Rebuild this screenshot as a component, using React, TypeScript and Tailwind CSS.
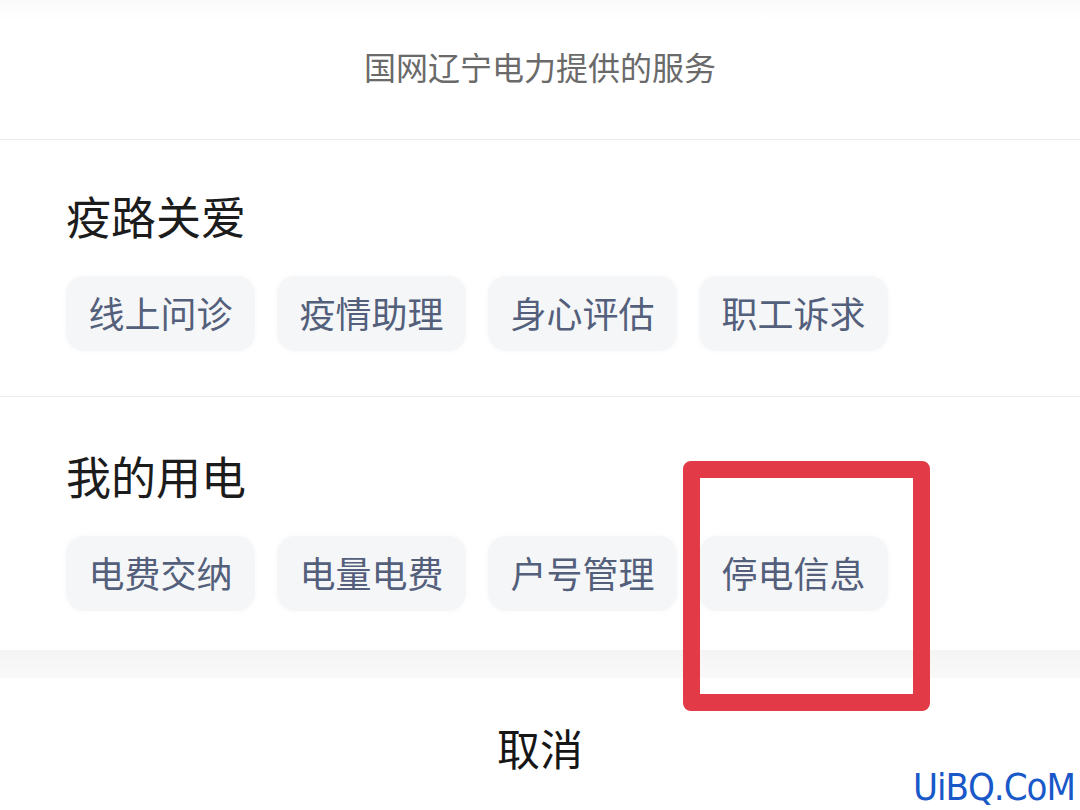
const cjk = { fontFamily: '"Noto Sans CJK SC", "Noto Sans", sans-serif' }

interface SectionProps {
  title: string
  items: string[]
  className: string
}

function Section({ title, items, className }: SectionProps) {
  return (
    <div className={className}>
      <h2 className="text-[45px] leading-none font-normal text-[#1c1c1c]">{title}</h2>
      <div className="mt-[38px] flex gap-[22px]">
        {items.map((item) => (
          <div
            key={item}
            className="flex h-[75px] w-[189px] items-center justify-center rounded-[18px] bg-[#f5f6f8] pb-[4px] text-[36px] leading-none text-[#535f7b] shadow-[0_0_6px_rgba(0,0,0,0.03)]"
          >
            {item}
          </div>
        ))}
      </div>
    </div>
  )
}

export default function App() {
  return (
    <div className="relative h-[810px] w-[1080px] overflow-hidden bg-white" style={cjk}>
      <div className="flex h-[139px] items-center justify-center bg-gradient-to-b from-[#fafafa] to-white to-[15%] pb-[8px] text-[32px] text-[#6a6a6a]">
        国网辽宁电力提供的服务
      </div>
      <div className="h-px bg-[#e9e9e9]" />
      <Section title="疫路关爱" items={['线上问诊', '疫情助理', '身心评估', '职工诉求']} className="h-[256px] px-[66px] pt-[53px]" />
      <div className="h-px bg-[#ececec]" />
      <Section title="我的用电" items={['电费交纳', '电量电费', '户号管理', '停电信息']} className="h-[253px] px-[66px] pt-[56px]" />
      <div className="h-[28px] bg-gradient-to-b from-[#f4f4f4] to-[#f9f9f9]" />
      <div className="flex h-[133px] items-center justify-center pt-[6px] text-[43px] text-[#161616]">取消</div>

      <div className="absolute left-[683px] top-[461px] h-[250px] w-[247px] rounded-[8px] border-[17px] border-[#e23a46]" />
      <div
        className="absolute bottom-[4px] right-[5px] text-[38px] leading-none tracking-[-1px] text-[#1858c8]"
        style={{ fontFamily: '"DejaVu Sans Condensed", "Liberation Sans", sans-serif' }}
      >
        UiBQ.CoM
      </div>
    </div>
  )
}
